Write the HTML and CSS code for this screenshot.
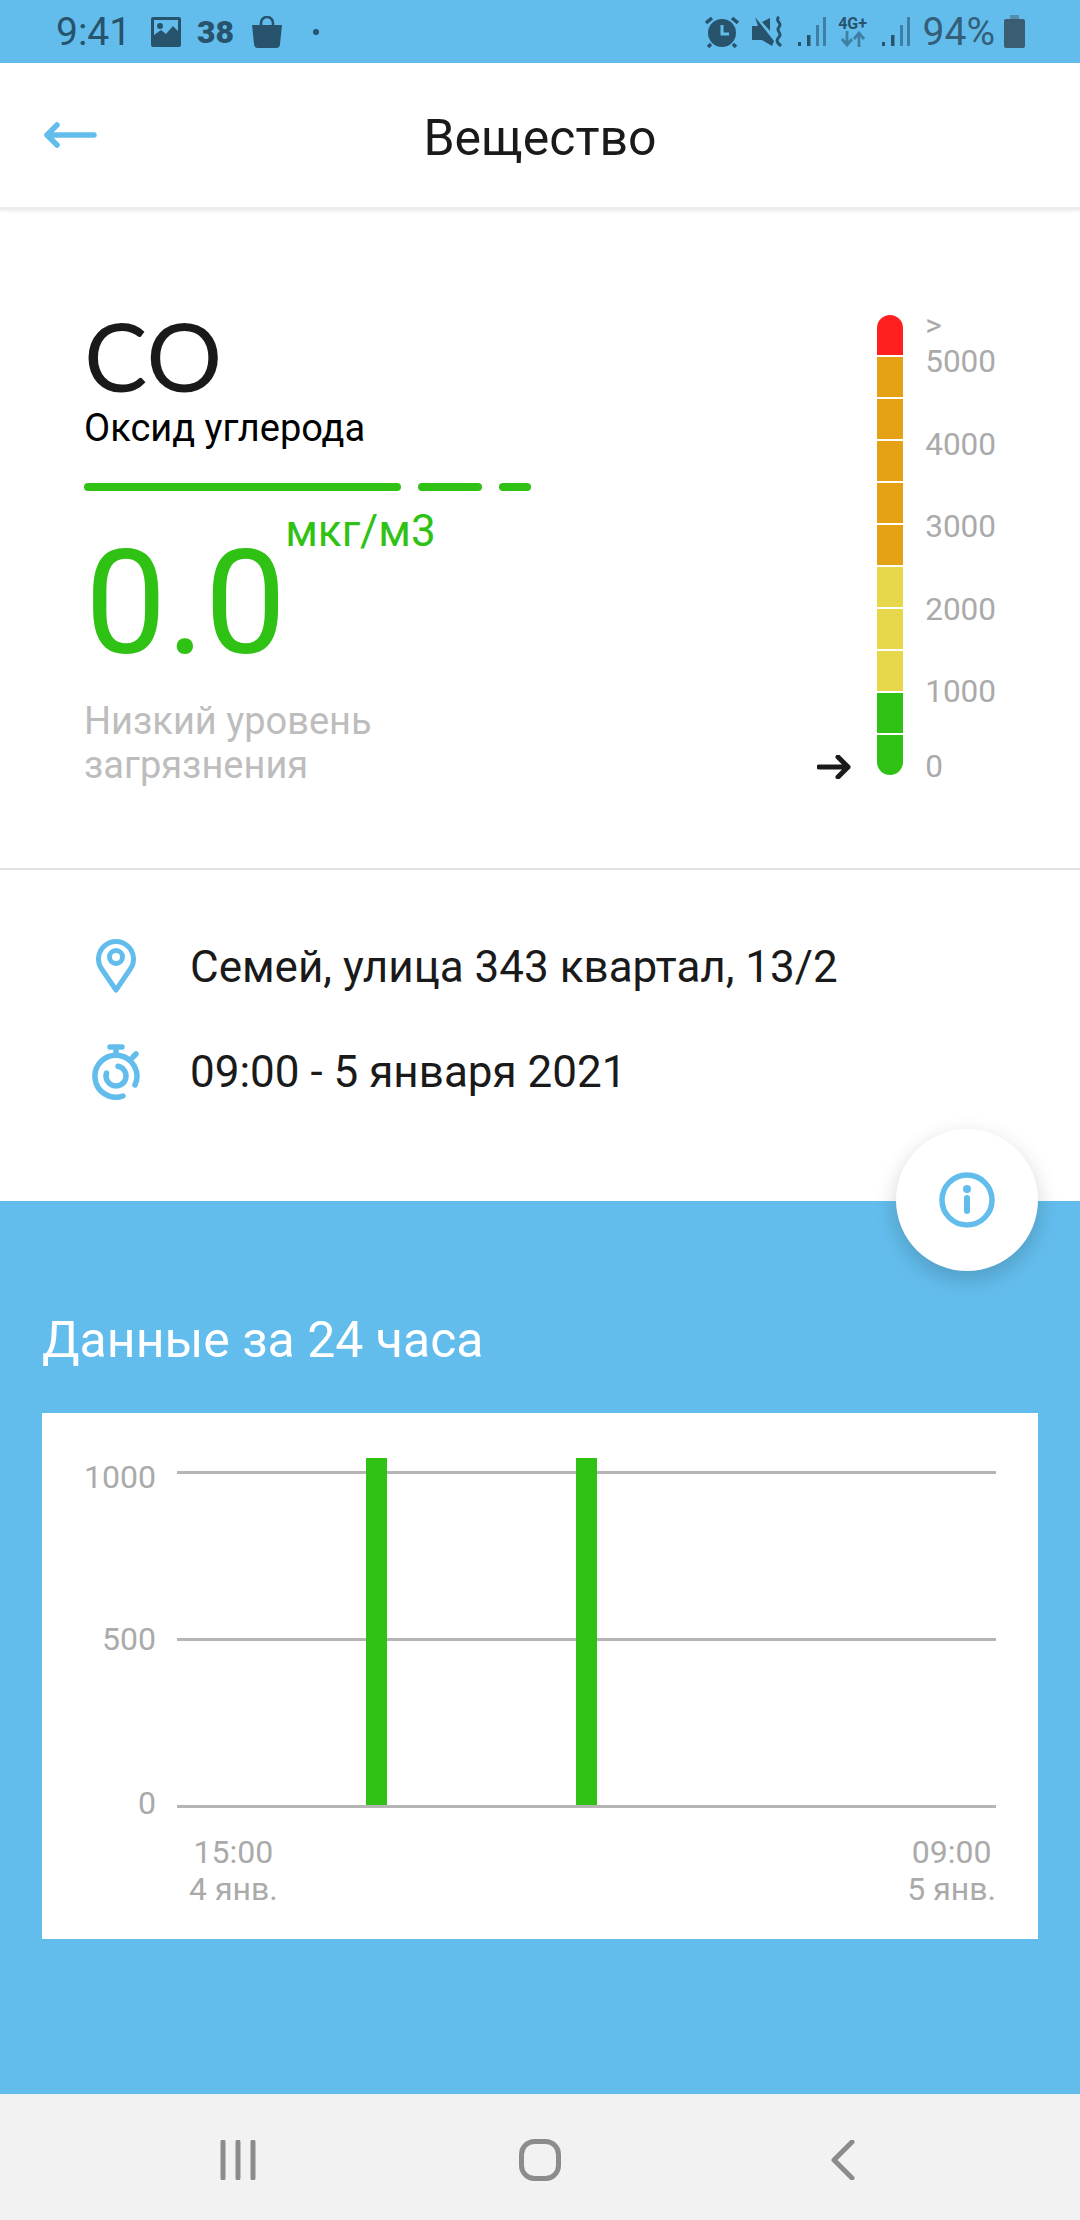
FILE: index.html
```html
<!DOCTYPE html>
<html lang="ru">
<head>
    <meta charset="utf-8">
    <title>Вещество</title>
    <link rel="stylesheet" href="styles.css">
</head>
<body>
    <div class="status-bar">
        <div class="status-left">
            <span class="status-time">9:41</span>
            <svg class="ic-image" viewBox="0 0 30 30"><path fill-rule="evenodd" d="M2 0h26a2 2 0 0 1 2 2v26a2 2 0 0 1-2 2H2a2 2 0 0 1-2-2V2a2 2 0 0 1 2-2zM3 3v15l7-5 5 4 7-8 5 5V3z"/><circle cx="9" cy="9" r="3"/></svg>
            <span class="status-count">38</span>
            <svg class="ic-bag" viewBox="0 0 30 32"><path d="M0 9h30l-2 19a4 4 0 0 1-4 4H6a4 4 0 0 1-4-4z"/><path d="M9 12V7a6 6 0 0 1 12 0v5" fill="none" stroke="#27536d" stroke-width="2.6"/></svg>
            <span class="status-dot"></span>
        </div>
        <div class="status-right">
            <svg class="ic-alarm" viewBox="0 0 34 32"><circle cx="17" cy="17" r="14"/><path d="M17 9v9h7" fill="none" stroke="#63bdec" stroke-width="3"/><path d="M1 7l6-5M33 7l-6-5M6 28l-3 3M28 28l3 3" fill="none" stroke="#27536d" stroke-width="3.500"/></svg>
            <svg class="ic-mute" viewBox="0 0 32 32"><path d="M3 1l19 24-2 5-10-6H0V10h6z"/><path d="M18 2v13l-8-9z"/><path d="M27 1c-5 4 4 6 0 10s4 6 0 10-1 6 2 9" fill="none" stroke="#27536d" stroke-width="3"/></svg>
            <svg class="ic-signal" viewBox="0 0 28 32"><path d="M0 26h3v4H0z"/><path d="M9 19h3.500v11H9z"/><path class="dim" d="M18 9h3v21h-3z"/><path class="dim" d="M25 1h3v29h-3z"/></svg>
            <div class="net-type">
                <span class="net-label">4G+</span>
                <svg class="ic-updown" viewBox="0 0 24 16"><path d="M6 0v12M1 8l5 6 5-6M18 16V3M13 8l5-6 5 6" fill="none" stroke="#3f7fa3" stroke-width="2.800"/></svg>
            </div>
            <svg class="ic-signal" viewBox="0 0 28 32"><path d="M0 26h3v4H0z"/><path d="M9 19h3.500v11H9z"/><path class="dim" d="M18 9h3v21h-3z"/><path class="dim" d="M25 1h3v29h-3z"/></svg>
            <span class="status-battery">94%</span>
            <svg class="ic-battery" viewBox="0 0 21 33"><path fill="#568ca9" d="M6 0h9v4H6z"/><path fill="#3b5d72" d="M2 4h17a2 2 0 0 1 2 2v25a2 2 0 0 1-2 2H2a2 2 0 0 1-2-2V6a2 2 0 0 1 2-2z"/></svg>
        </div>
    </div>

    <header class="app-header">
        <svg class="back-arrow" viewBox="0 0 52 26"><path d="M50 13H3M13 3L3 13l10 10" fill="none" stroke="#63bdec" stroke-width="5.500" stroke-linecap="round" stroke-linejoin="round"/></svg>
        <h1 class="app-title">Вещество</h1>
    </header>

    <section class="substance">
        <div class="substance-info">
            <div class="formula">CO</div>
            <div class="substance-name">Оксид углерода</div>
            <div class="level-rule">
                <span class="rule-long"></span>
                <span class="rule-mid"></span>
                <span class="rule-short"></span>
            </div>
            <div class="reading">
                <span class="reading-value">0.0</span>
                <span class="reading-unit">мкг/м3</span>
            </div>
            <div class="reading-note">Низкий уровень<br>загрязнения</div>
        </div>

        <div class="scale">
            <svg class="scale-arrow" viewBox="0 0 34 24"><path d="M2 12h29M21 2l10 10-10 10" fill="none" stroke="#1a1a1a" stroke-width="5" stroke-linecap="round" stroke-linejoin="round"/></svg>
            <div class="scale-bar">
                <span class="seg red"></span>
                <span class="seg orange"></span>
                <span class="seg orange"></span>
                <span class="seg orange"></span>
                <span class="seg orange"></span>
                <span class="seg orange"></span>
                <span class="seg yellow"></span>
                <span class="seg yellow"></span>
                <span class="seg yellow"></span>
                <span class="seg green"></span>
                <span class="seg green"></span>
            </div>
            <div class="scale-labels">
                <span class="scale-over">&gt;</span>
                <span class="scale-label">5000</span>
                <span class="scale-label">4000</span>
                <span class="scale-label">3000</span>
                <span class="scale-label">2000</span>
                <span class="scale-label scale-label-low">1000</span>
                <span class="scale-label">0</span>
            </div>
        </div>
    </section>

    <section class="details">
        <div class="detail-row">
            <div class="detail-icon">
                <svg class="ic-pin" viewBox="0 0 40 56"><path d="M20 53L6 32.500a17.500 17.500 0 1 1 28 0z" fill="none" stroke="#63bdec" stroke-width="5" stroke-linejoin="round"/><circle cx="20" cy="20" r="6.500" fill="none" stroke="#63bdec" stroke-width="5"/></svg>
            </div>
            <span class="detail-text">Семей, улица 343 квартал, 13/2</span>
        </div>
        <div class="detail-row">
            <div class="detail-icon">
                <svg class="ic-timer" viewBox="0 0 48 56"><g fill="none" stroke="#63bdec" stroke-width="5.500" stroke-linecap="round"><path d="M43 41A21 21 0 1 0 31 52"/><path d="M26 22.200A10 10 0 1 1 14.500 29"/><path d="M18 3h12M24 3v6M41 13l3-3"/></g></svg>
            </div>
            <span class="detail-text">09:00 - 5 января 2021</span>
        </div>
    </section>

    <section class="history">
        <button class="info-button">
            <svg class="ic-info" viewBox="0 0 56 56"><circle cx="28" cy="28" r="25" fill="none" stroke="#63bdec" stroke-width="5.500"/><circle cx="28" cy="17" r="4" fill="#63bdec"/><path d="M28 26v13" stroke="#63bdec" stroke-width="6" stroke-linecap="round"/></svg>
        </button>
        <h2 class="history-title">Данные за 24 часа</h2>
        <div class="chart-card">
            <div class="chart-plot">
                <div class="chart-row">
                    <span class="chart-tick tick-top">1000</span>
                    <span class="chart-line"></span>
                </div>
                <div class="chart-row">
                    <span class="chart-tick">500</span>
                    <span class="chart-line"></span>
                </div>
                <div class="chart-row">
                    <span class="chart-tick tick-bottom">0</span>
                    <span class="chart-line"></span>
                </div>
            </div>
            <span class="chart-bar" style="left: 324px"></span>
            <span class="chart-bar" style="left: 534px"></span>
            <div class="chart-axis">
                <span class="axis-date">15:00<br>4 янв.</span>
                <span class="axis-date">09:00<br>5 янв.</span>
            </div>
        </div>
    </section>

    <nav class="nav-bar">
        <svg class="nav-recent" viewBox="0 0 36 40"><path d="M3 2v36M18 2v36M33 2v36" stroke="#8c8c8c" stroke-width="5" stroke-linecap="round"/></svg>
        <svg class="nav-home" viewBox="0 0 42 42"><rect x="2.500" y="2.500" width="37" height="37" rx="13" fill="none" stroke="#8c8c8c" stroke-width="5"/></svg>
        <svg class="nav-back" viewBox="0 0 24 40"><path d="M21 2L3 20l18 18" fill="none" stroke="#8c8c8c" stroke-width="5" stroke-linecap="round" stroke-linejoin="round"/></svg>
    </nav>
</body>
</html>
```

FILE: styles.css
```css
* {
    box-sizing: border-box;
}

body {
    margin: 0;
    width: 1080px;
    height: 2220px;
    display: flex;
    flex-direction: column;
    font-family: Roboto, "Noto Sans", sans-serif;
    background-color: #fff;
    overflow: hidden;
}

/* status bar */
.status-bar {
    height: 63px;
    flex: none;
    display: flex;
    justify-content: space-between;
    align-items: center;
    padding: 0 55px 0 56px;
    background-color: #63bdec;
    color: #27536d;
}

.status-bar svg {
    display: block;
    fill: #27536d;
}

.status-left,
.status-right {
    display: flex;
    align-items: center;
}

.status-time {
    font-size: 39px;
    width: 95px;
}

.ic-image {
    width: 30px;
    height: 30px;
}

.status-count {
    font-size: 32px;
    font-weight: 900;
    width: 71px;
    padding-left: 16px;
}

.ic-bag {
    width: 30px;
    height: 32px;
}

.status-dot {
    width: 6px;
    height: 6px;
    margin-left: 31px;
    border-radius: 50%;
    background-color: #27536d;
}

.ic-alarm {
    width: 34px;
    height: 32px;
}

.ic-mute {
    width: 32px;
    height: 32px;
    margin-left: 13px;
}

.ic-signal {
    width: 28px;
    height: 32px;
    margin-left: 14px;
}

.ic-signal .dim {
    fill: #3f7fa3;
}

.net-type {
    width: 32px;
    margin-left: 11px;
    display: flex;
    flex-direction: column;
    align-items: center;
}

.net-label {
    font-size: 16px;
    font-weight: 700;
    line-height: 15px;
}

.ic-updown {
    width: 24px;
    height: 16px;
}

.net-type + .ic-signal {
    margin-left: 13px;
}

.status-battery {
    font-size: 39px;
    margin-left: 13px;
    color: #335f79;
}

.ic-battery {
    width: 21px;
    height: 33px;
    margin-left: 9px;
}

/* header */
.app-header {
    height: 147px;
    flex: none;
    position: relative;
    display: flex;
    justify-content: center;
    align-items: center;
    padding-top: 5px;
    border-bottom: 3px solid #ececec;
    box-shadow: 0 2px 3px rgba(0, 0, 0, 0.05);
}

.back-arrow {
    position: absolute;
    left: 43px;
    top: 59px;
    width: 54px;
    height: 26px;
}

.app-title {
    margin: 0;
    font-size: 50px;
    font-weight: 400;
    color: #1a1a1a;
}

/* substance card */
.substance {
    height: 660px;
    flex: none;
    display: flex;
    justify-content: space-between;
    padding: 105px 84px 0 84px;
    border-bottom: 2px solid #e2e2e2;
}

.formula {
    font-family: Lato, sans-serif;
    font-size: 95px;
    line-height: 90px;
    margin-top: -5px;
    color: #1a1a1a;
}

.substance-name {
    font-size: 38px;
    line-height: 44px;
    margin-top: 6px;
    color: #000;
}

.level-rule {
    display: flex;
    gap: 17px;
    margin-top: 33px;
}

.level-rule span {
    height: 8px;
    border-radius: 4px;
    background-color: #30c115;
}

.rule-long {
    width: 317px;
}

.rule-mid {
    width: 64px;
}

.rule-short {
    width: 32px;
}

.reading {
    display: flex;
    margin-top: 37px;
}

.reading-value {
    font-size: 145px;
    line-height: 150px;
    padding-left: 1px;
    color: #30c115;
}

.reading-unit {
    font-size: 44px;
    line-height: 50px;
    margin: -22px 0 0 -1px;
    color: #30c115;
}

.reading-note {
    font-size: 38px;
    line-height: 44px;
    margin-top: 21px;
    color: #bdbdbd;
}

.scale {
    display: flex;
    gap: 0;
}

.scale-arrow {
    width: 34px;
    height: 24px;
    margin: 440px 26px 0 0;
}

.scale-bar {
    width: 26px;
    height: 460px;
    display: flex;
    flex-direction: column;
    gap: 2px;
    border-radius: 13px;
    overflow: hidden;
}

.seg {
    height: 40px;
    flex: none;
}

.red {
    background-color: #ff1f1f;
}

.orange {
    background-color: #e3a113;
}

.yellow {
    background-color: #e6d84a;
}

.green {
    background-color: #30c115;
}

.scale-labels {
    display: flex;
    flex-direction: column;
    margin: -7px 0 0 22px;
    font-size: 31.500px;
    color: #aaa;
}

.scale-over {
    height: 36px;
    line-height: 36px;
}

.scale-label {
    height: 36px;
    line-height: 36px;
    margin-bottom: 46.500px;
}

.scale-label-low {
    margin-bottom: 39px;
}

/* location and time */
.details {
    height: 331px;
    flex: none;
    display: flex;
    flex-direction: column;
    gap: 55px;
    padding: 72px 0 0 84px;
}

.detail-row {
    height: 50px;
    display: flex;
    align-items: center;
    gap: 42px;
}

.detail-icon {
    width: 64px;
    display: flex;
    justify-content: center;
}

.ic-pin {
    width: 40px;
    height: 56px;
    margin-bottom: 5px;
}

.ic-timer {
    width: 48px;
    height: 56px;
}

.detail-text {
    font-size: 44px;
    color: #1a1a1a;
}

/* history block */
.history {
    flex: 1;
    position: relative;
    padding: 114px 42px 0;
    background-color: #63bdec;
}

.info-button {
    position: absolute;
    top: -72px;
    right: 42px;
    width: 142px;
    height: 142px;
    display: flex;
    justify-content: center;
    align-items: center;
    padding: 0;
    border: none;
    border-radius: 50%;
    background-color: #fff;
    box-shadow: 0 8px 22px rgba(0, 0, 0, 0.18);
}

.ic-info {
    width: 56px;
    height: 56px;
}

.history-title {
    margin: 0;
    font-size: 50px;
    font-weight: 400;
    line-height: 50px;
    color: #fff;
}

.chart-card {
    height: 526px;
    position: relative;
    margin-top: 48px;
    padding: 39px 42px 0 0;
    background-color: #fff;
}

.chart-plot {
    display: flex;
    flex-direction: column;
    gap: 127px;
}

.chart-row {
    height: 40px;
    display: flex;
    align-items: center;
    gap: 21px;
}

.chart-tick {
    width: 114px;
    text-align: right;
    font-size: 32px;
    color: #aaa;
}

.tick-top {
    padding-top: 10px;
}

.tick-bottom {
    padding-bottom: 6px;
}

.chart-line {
    flex: 1;
    height: 3px;
    background-color: #b5b5b5;
}

.chart-bar {
    position: absolute;
    top: 45px;
    width: 21px;
    height: 347px;
    background-color: #30c115;
}

.chart-axis {
    display: flex;
    justify-content: space-between;
    margin: 8px 0 0 147px;
}

.axis-date {
    text-align: center;
    font-size: 32px;
    line-height: 37px;
    color: #aaa;
}

/* system navigation */
.nav-bar {
    height: 126px;
    flex: none;
    display: flex;
    align-items: center;
    padding: 5px 0 0 220px;
    background-color: #f2f2f2;
}

.nav-recent {
    width: 36px;
    height: 40px;
}

.nav-home {
    width: 42px;
    height: 42px;
    margin-left: 263px;
}

.nav-back {
    width: 24px;
    height: 40px;
    margin-left: 270px;
}
```
